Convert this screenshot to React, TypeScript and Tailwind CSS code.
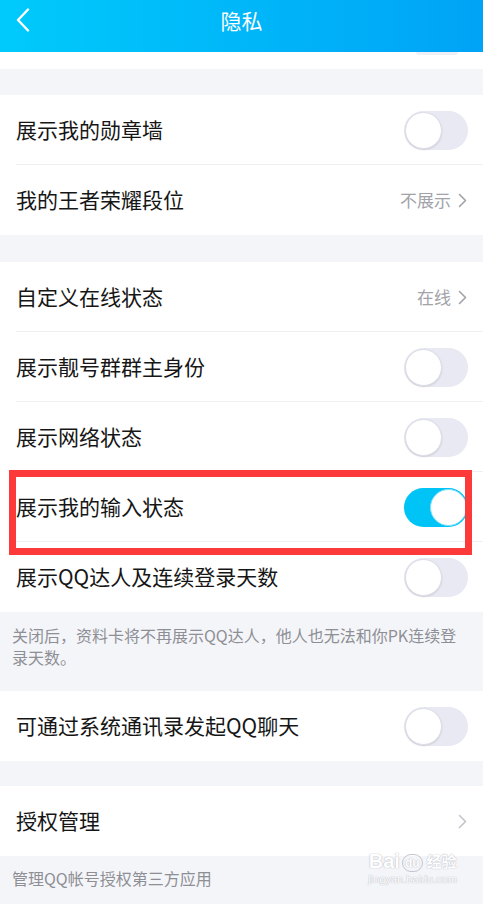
import React from 'react';

const font = { fontFamily: '"Noto Sans CJK SC", "Noto Sans", sans-serif' };

function Chevron({ className = '' }: { className?: string }) {
    return (
        <svg width="9" height="15" viewBox="0 0 9 15" className={className} fill="none">
            <path d="M1.5 1.5L7.5 7.5L1.5 13.5" stroke="currentColor" strokeWidth="1.6" strokeLinecap="round" strokeLinejoin="round" />
        </svg>
    );
}

function Toggle({ on = false }: { on?: boolean }) {
    return (
        <div
            className={`flex items-center w-[64px] h-[39px] rounded-full p-[1px] ${on ? 'bg-[#00c4f6] justify-end' : 'bg-[#e8e9f2] justify-start'}`}
        >
            <div
                className={`w-[37px] h-[37px] rounded-full bg-white border ${on ? 'border-[#7fe0fb]' : 'border-[#dcdde6] shadow-[0_1px_2px_rgba(0,0,0,0.12)]'}`}
            />
        </div>
    );
}

function Row({
    label,
    right,
    divider = true,
    children,
}: {
    label: string;
    right?: React.ReactNode;
    divider?: boolean;
    children?: React.ReactNode;
}) {
    return (
        <div className="relative bg-white">
            <div className="flex items-center justify-between h-[70px] pl-[16px] pr-[15px]">
                <span className="text-[21px] text-[#161616]">{label}</span>
                {right}
            </div>
            {divider && <div className="ml-[16px] h-px bg-[#efeff3] -mt-px" />}
            {children}
        </div>
    );
}

function Value({ text, light = false }: { text?: string; light?: boolean }) {
    return (
        <div className={`flex items-center gap-[7px] pr-[1px] ${light ? 'text-[#c4c4ca]' : 'text-[#a2a3a9]'}`}>
            {text && <span className="text-[17px]">{text}</span>}
            <Chevron />
        </div>
    );
}

export default function App() {
    return (
        <div className="w-[483px] h-[904px] overflow-hidden bg-[#f4f5f9]" style={font}>
            {/* Header */}
            <div className="h-[52px] bg-gradient-to-r from-[#00cafb] to-[#00a3f6]">
                <div className="relative flex items-center justify-center h-[41px]">
                    <svg width="14" height="24" viewBox="0 0 14 24" fill="none" className="absolute left-[16px] top-[8px]">
                        <path d="M12 1.5L2 12L12 22.5" stroke="white" strokeWidth="2.4" strokeLinecap="round" strokeLinejoin="round" />
                    </svg>
                    <span className="text-[21px] text-white">隐私</span>
                </div>
            </div>

            {/* Scrolled section tail */}
            <div className="h-[17px] bg-white flex justify-end pr-[25px]">
                <div className="w-[42px] h-[3px] rounded-b-full bg-[#eef0f6]" />
            </div>

            <div className="h-[26px]" />

            {/* Section 1 */}
            <Row label="展示我的勋章墙" right={<Toggle />} />
            <Row label="我的王者荣耀段位" right={<Value text="不展示" />} divider={false} />

            <div className="h-[27px]" />

            {/* Section 2 */}
            <Row label="自定义在线状态" right={<Value text="在线" />} />
            <Row label="展示靓号群群主身份" right={<Toggle />} />
            <Row label="展示网络状态" right={<Toggle />} />
            <Row label="展示我的输入状态" right={<Toggle on />}>
                <div className="absolute z-10 left-[9px] right-[11px] top-[-2px] bottom-[-13px] border-[7px] border-[#fd3a3a] pointer-events-none" />
            </Row>
            <Row label="展示QQ达人及连续登录天数" right={<Toggle />} divider={false} />

            {/* Footnote */}
            <div className="h-[79px] pl-[12px] pr-[8px] pt-[12px] text-[16px] leading-[22px] text-[#8e8f95]">
                关闭后，资料卡将不再展示QQ达人，他人也无法和你PK连续登
                <br />
                录天数。
            </div>

            <Row label="可通过系统通讯录发起QQ聊天" right={<Toggle />} divider={false} />

            <div className="h-[25px]" />

            <Row label="授权管理" right={<Value light />} divider={false} />

            {/* Footer */}
            <div className="relative h-[47px] pl-[12px] pt-[11px] text-[16px] leading-[22px] text-[#8e8f95]">
                管理QQ帐号授权第三方应用
                <div className="absolute right-[26px] top-[-6px] flex flex-col items-center text-white [text-shadow:0_0_1px_#b9bac4,0_0_1px_#b9bac4]" style={{ fontFamily: '"Liberation Sans", "Noto Sans CJK SC", sans-serif' }}>
                    <div className="flex items-end gap-[2px] text-[20px] font-bold leading-[22px]">
                        <span>Bai</span>
                        <span className="text-[12px] leading-[16px] rounded-full border border-[#c4c5ce] px-[2px]">du</span>
                        <span className="text-[15px] leading-[20px] ml-[2px]">经验</span>
                    </div>
                    <span className="text-[11px] leading-[14px]">jingyan.baidu.com</span>
                </div>
            </div>
        </div>
    );
}
